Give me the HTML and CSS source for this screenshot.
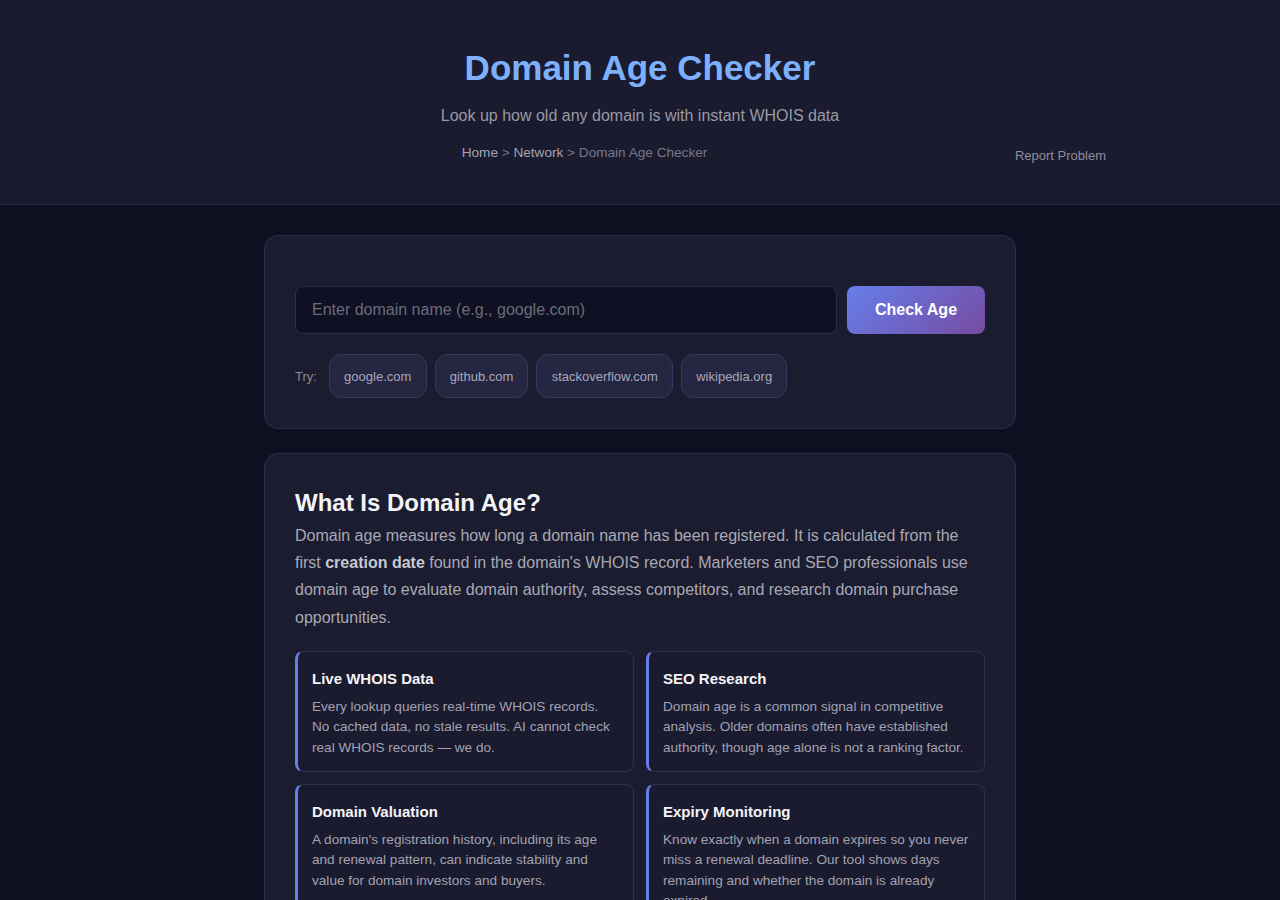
FILE: index.html
```html
<!DOCTYPE html>
<html lang="en">
<head>
    <meta charset="UTF-8">
    <meta name="viewport" content="width=device-width, initial-scale=1.0">
    <title>Domain Age Checker</title>
    <link rel="stylesheet" href="styles.css">
</head>
<body>
    <header class="site-header">
        <h1>Domain Age Checker</h1>
        <p class="subtitle">Look up how old any domain is with instant WHOIS data</p>
        <div class="header-row">
            <nav class="breadcrumb">
                <a href="#">Home</a> &gt; <a href="#">Network</a> &gt; <span>Domain Age Checker</span>
            </nav>
            <a href="#" class="report-link">Report Problem</a>
        </div>
    </header>

    <main class="container">
        <section class="card lookup-card">
            <form id="lookupForm" class="lookup-form">
                <input type="text" id="domain" placeholder="Enter domain name (e.g., google.com)">
                <button type="submit" class="btn">Check Age</button>
            </form>
            <div class="examples">
                <span class="examples-label">Try:</span>
                <button type="button" class="chip">google.com</button>
                <button type="button" class="chip">github.com</button>
                <button type="button" class="chip">stackoverflow.com</button>
                <button type="button" class="chip">wikipedia.org</button>
            </div>
        </section>

        <section class="card info-card">
            <h2>What Is Domain Age?</h2>
            <p>Domain age measures how long a domain name has been registered. It is calculated from the first <strong>creation date</strong> found in the domain's WHOIS record. Marketers and SEO professionals use domain age to evaluate domain authority, assess competitors, and research domain purchase opportunities.</p>

            <div class="features">
                <div class="feature">
                    <h3>Live WHOIS Data</h3>
                    <p>Every lookup queries real-time WHOIS records. No cached data, no stale results. AI cannot check real WHOIS records — we do.</p>
                </div>
                <div class="feature">
                    <h3>SEO Research</h3>
                    <p>Domain age is a common signal in competitive analysis. Older domains often have established authority, though age alone is not a ranking factor.</p>
                </div>
                <div class="feature">
                    <h3>Domain Valuation</h3>
                    <p>A domain's registration history, including its age and renewal pattern, can indicate stability and value for domain investors and buyers.</p>
                </div>
                <div class="feature">
                    <h3>Expiry Monitoring</h3>
                    <p>Know exactly when a domain expires so you never miss a renewal deadline. Our tool shows days remaining and whether the domain is already expired.</p>
                </div>
            </div>
        </section>
    </main>

    <script>
        // Fill the input when an example chip is clicked
        document.querySelectorAll('.chip').forEach(function(chip) {
            chip.addEventListener('click', function() {
                document.getElementById('domain').value = chip.textContent;
            });
        });

        document.getElementById('lookupForm').addEventListener('submit', function(e) {
            e.preventDefault();
        });
    </script>
</body>
</html>
```

FILE: styles.css
```css
* {
    margin: 0;
    padding: 0;
    box-sizing: border-box;
    font-family: Arial, "Liberation Sans", sans-serif;
}
body {
    background: #0f0f22;
    color: #e8e8f0;
}
a {
    color: inherit;
    text-decoration: none;
}

/* Header */
.site-header {
    background: #1a1b2e;
    border-bottom: 1px solid #2a2b42;
    padding: 46px 0 39px;
    text-align: center;
}
.site-header h1 {
    font-size: 35px;
    font-weight: bold;
    color: #7cb0fd;
    line-height: 44px;
}
.subtitle {
    margin-top: 16px;
    font-size: 16px;
    color: #999aa4;
    line-height: 20px;
}
.header-row {
    width: 932px;
    margin: 18px auto 0;
    display: flex;
    align-items: flex-start;
    gap: 20px;
}
.breadcrumb {
    flex: 1;
    text-align: center;
    font-size: 13.6px;
    color: #77778a;
    line-height: 18px;
}
.breadcrumb a {
    color: #a4a4b0;
}
.breadcrumb span {
    color: #77778a;
}
.report-link {
    font-size: 13px;
    line-height: 18px;
    color: #8e8e9a;
    margin-top: 3px;
}

/* Main */
.container {
    width: 752px;
    margin: 30px auto 0;
    display: flex;
    flex-direction: column;
    gap: 24px;
}
.card {
    background: #1b1c2f;
    border: 1px solid #2c2d48;
    border-radius: 14px;
    padding: 30px;
}
.lookup-card {
    padding-top: 50px;
}
.lookup-form {
    display: flex;
    gap: 10px;
}
.lookup-form input {
    flex: 1;
    height: 48px;
    padding: 0 16px;
    background: #0f1023;
    border: 1px solid #2e2f3e;
    border-radius: 8px;
    color: #e8e8f0;
    font-size: 16px;
    outline: none;
}
.lookup-form input::placeholder {
    color: #6c6c78;
}
.btn {
    width: 138px;
    height: 48px;
    border: none;
    border-radius: 8px;
    background: linear-gradient(135deg, #667eea, #764ba2);
    color: white;
    font-size: 16px;
    font-weight: bold;
    cursor: pointer;
}
.btn:hover {
    opacity: 0.9;
}
.examples {
    margin-top: 20px;
    display: flex;
    align-items: center;
    gap: 8px;
}
.examples-label {
    font-size: 13px;
    color: #8a8a98;
    margin-right: 4px;
}
.chip {
    height: 44px;
    padding: 0 14.2px;
    background: #252642;
    border: 1px solid #36375a;
    border-radius: 12px;
    color: #a8a8bc;
    font-size: 13px;
    cursor: pointer;
}
.chip:hover {
    background: #2d2e50;
}

/* Info section */
.info-card h2 {
    font-size: 24px;
    font-weight: bold;
    color: #f4f4f8;
    line-height: 38px;
}
.info-card > p {
    font-size: 16px;
    line-height: 27.2px;
    color: #a9a9b5;
}
.info-card > p strong {
    color: #c9c9d2;
}
.features {
    margin-top: 20px;
    display: grid;
    grid-template-columns: 1fr 1fr;
    gap: 12px;
}
.feature {
    background: #1a1b2e;
    border: 1px solid #2f3042;
    border-left: 3px solid #667eea;
    border-radius: 8px;
    padding: 17px 14px 13px;
}
.feature h3 {
    font-size: 15px;
    font-weight: bold;
    color: #f4f4f8;
    line-height: 20px;
    margin-bottom: 8px;
}
.feature p {
    font-size: 13.6px;
    line-height: 20.4px;
    color: #a2a2b2;
}
```
